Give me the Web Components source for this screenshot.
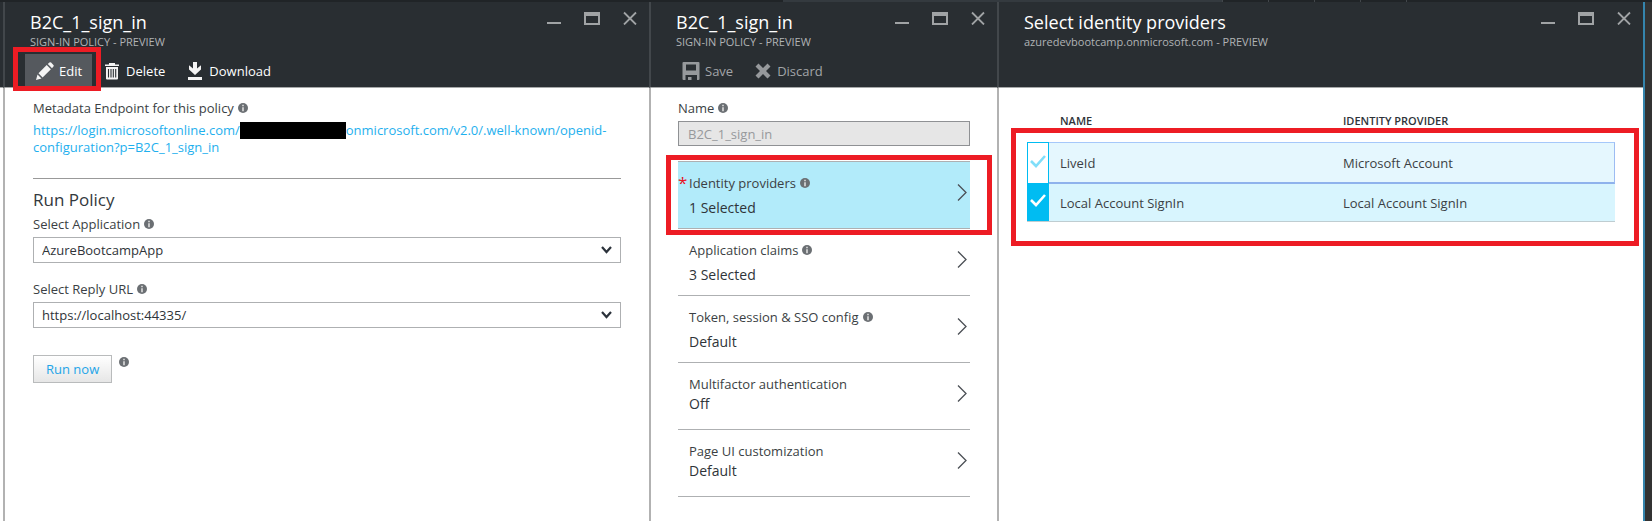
<!DOCTYPE html>
<html lang="en">
<head>
<meta charset="utf-8">
<title>B2C_1_sign_in</title>
<style>
  html, body { margin: 0; }
  body {
    font: 13px/18px "Open Sans", "Noto Sans", sans-serif;
    color: #3b3f44;
    background: #fff;
  }
</style>
</head>
<body>
<portal-page>
  <portal-blade heading="B2C_1_sign_in" subheading="SIGN-IN POLICY - PREVIEW">
    <call-out slot="commands" frame="edit"><command-button icon="edit" active>Edit</command-button></call-out>
    <command-button slot="commands" icon="delete">Delete</command-button>
    <command-button slot="commands" icon="download">Download</command-button>
    <policy-summary></policy-summary>
  </portal-blade>
  <portal-blade heading="B2C_1_sign_in" subheading="SIGN-IN POLICY - PREVIEW" compact>
    <command-button slot="commands" icon="save" disabled>Save</command-button>
    <command-button slot="commands" icon="discard" disabled>Discard</command-button>
    <policy-editor></policy-editor>
  </portal-blade>
  <portal-blade heading="Select identity providers" subheading="azuredevbootcamp.onmicrosoft.com - PREVIEW">
    <provider-table></provider-table>
  </portal-blade>
</portal-page>

<script>
const ICONS = {
  edit: '<path d="M0 18l1.500-5.500 4 4zM2.500 11.300L10.700 3l4.200 4.200-8.300 8.300zM11.800 2l1.600-1.500q.8-.7 1.700.1l2.300 2.300q.8.900 0 1.700L16 6.200z"/>',
  delete: '<path d="M6 1h6v1.500h4V4H2V2.500h4zM3 5h12v11.500q0 1-1 1H4q-1 0-1-1z"/><path d="M5.500 7v8.500M8 7v8.500M10.300 7v8.500M12.700 7v8.500" stroke="#292e32" stroke-width="1.100"/>',
  download: '<path d="M7 0h4v6.500l4-3.300v4.300L9 13 3 7.500V3.200l4 3.300zM2 15h14v3H2z"/>',
  save: '<path fill-rule="evenodd" d="M1.500 0h15q1 0 1 1v16q0 1-1 1H15v-5H3.500v5H1.500q-1 0-1-1V1q0-1 1-1zM4 2.500v6h10v-6z"/><path d="M6 15h3.500v3H6z"/>',
  discard: '<path d="M4.500 1.500L9 6l4.500-4.500 3 3L12 9l4.500 4.500-3 3L9 12l-4.500 4.500-3-3L6 9 1.500 4.500z"/>'
};

function define(name, template, setup) {
  const t = document.createElement('template');
  t.innerHTML = template;
  customElements.define(name, class extends HTMLElement {
    constructor() {
      super();
      this.attachShadow({ mode: 'open' }).append(t.content.cloneNode(true));
    }
    connectedCallback() {
      if (setup) setup(this, this.shadowRoot);
    }
  });
}

define('info-icon', `
  <style>
    :host { display: inline-block; width: 10px; height: 10px; margin-left: 4px; }
    svg { display: block; }
  </style>
  <svg width="10" height="10" viewBox="0 0 10 10" aria-hidden="true">
    <circle cx="5" cy="5" r="5" fill="#6b6f73"/>
    <path d="M4.200 1.800h1.600v1.500H4.200zM4.200 4.200h1.600v4H4.200z" fill="#dcdddd"/>
  </svg>`);

/* A red frame drawn around whatever is slotted in. */
define('call-out', `
  <style>
    :host { display: block; position: relative; }
    .frame { position: absolute; z-index: 2; border: 5px solid #ed1c24; pointer-events: none; }
    :host([frame=edit]) .frame { inset: -7px -9px -4px -12px; }
    :host([frame=item]) .frame { inset: -7px -22px -6px -12px; }
    :host([frame=table]) .frame { inset: -14px -24px -24px -16px; }
  </style>
  <slot></slot><div class="frame"></div>`);

define('command-button', `
  <style>
    :host { display: block; }
    button {
      display: flex; align-items: center; gap: 5px; height: 33px; padding: 0 10px 0 11px;
      border: 0; background: none; color: #fff; font: inherit;
    }
    svg { fill: #f4f4f4; }
    :host([active]) button { background: #55595e; }
    :host([disabled]) button { color: #a2a5a8; }
    :host([disabled]) svg { fill: #96999c; }
  </style>
  <button type="button"><svg width="18" height="18" viewBox="0 0 18 18" aria-hidden="true"></svg><slot></slot></button>`,
  (el, root) => {
    root.querySelector('svg').innerHTML = ICONS[el.getAttribute('icon')];
    root.querySelector('button').disabled = el.hasAttribute('disabled');
  });

define('window-controls', `
  <style>
    :host { display: flex; }
    button { width: 38px; height: 32px; padding: 0; border: 0; background: none; display: grid; place-items: center; }
  </style>
  <button type="button" aria-label="Minimize"><svg width="16" height="14" viewBox="0 0 16 14"><path d="M1 11h14v2H1z" fill="#a0a3a5"/></svg></button>
  <button type="button" aria-label="Maximize"><svg width="16" height="14" viewBox="0 0 16 14"><path fill-rule="evenodd" d="M0 1h16v13H0zM2 5v7h12V5z" fill="#a0a3a5"/></svg></button>
  <button type="button" aria-label="Close"><svg width="16" height="14" viewBox="0 0 16 14"><path d="M2 1.500l12 12M14 1.500l-12 12" stroke="#a0a3a5" stroke-width="1.800"/></svg></button>`);

define('portal-blade', `
  <style>
    :host { display: flex; flex-direction: column; min-width: 0; }
    header {
      display: flex; justify-content: space-between; align-items: flex-start;
      box-sizing: border-box; height: 86px; color: #fff;
      background: #292e32; border-left: 2px solid #42474b; border-bottom: 1px solid #a6a8a9;
    }
    .titles { padding: 8px 0 0 20px; }
    h2 { margin: 0 5px; font-size: 18px; line-height: 24px; font-weight: 400; white-space: nowrap; }
    p { margin: 0 5px; font-size: 11px; line-height: 16px; font-weight: 500; color: #b0b3b5; white-space: nowrap; }
    .commands { display: flex; padding-top: 4px; }
    main { flex: 1; padding: 11px 28px; border-left: 2px solid #b2b2b2; }
    :host([compact]) main { padding: 11px 27px; }
  </style>
  <header>
    <div class="titles"><h2></h2><p></p><div class="commands"><slot name="commands"></slot></div></div>
    <window-controls></window-controls>
  </header>
  <main><slot></slot></main>`,
  (el, root) => {
    root.querySelector('h2').textContent = el.getAttribute('heading');
    root.querySelector('p').textContent = el.getAttribute('subheading');
  });

define('portal-page', `
  <style>
    :host { display: flex; flex-direction: column; min-height: 100vh; }
    .strip { display: flex; height: 2px; background: #202427; }
    .strip i { flex: 45; border-left: 1px solid #42474b; }
    .strip .gap { flex: 785; border: 0; }
    .strip .light { flex: 441; border: 0; background: #343a3f; }
    .strip .rest { flex: 246; }
    .blades {
      flex: 1; display: grid; grid-template-columns: 3px 646fr 348fr 646fr 9px;
    }
    .gutter::before { content: ""; display: block; box-sizing: border-box; height: 86px; background: #292e32; border-bottom: 1px solid #a6a8a9; }
    .rail { background: #333; border-left: 2px solid #3585ad; }
  </style>
  <div class="strip"><i class="gap"></i><i class="light"></i><i></i><i></i><i></i><i></i><i class="rest"></i></div>
  <div class="blades"><div class="gutter"></div><slot></slot><div class="rail"></div></div>`);

define('policy-summary', `
  <style>
    :host { display: block; }
    .link { margin: 5px 0 0; line-height: 17px; }
    a { color: #1fb0ee; text-decoration: none; }
    .redacted { display: inline-block; width: 106px; height: 17px; background: #000; vertical-align: top; }
    hr { height: 1px; margin: 22px 0 9px; border: 0; background: #999; }
    h3 { margin: 0 0 3px; font-size: 17px; line-height: 24px; font-weight: 400; color: #33383d; }
    .field { margin-bottom: 17px; }
    label { display: block; margin-bottom: 4px; }
    .combo { display: grid; align-items: center; }
    .combo > * { grid-area: 1 / 1; }
    select {
      appearance: none; width: 100%; height: 26px; padding: 0 8px; border: 1px solid #aeb0b2; border-radius: 0;
      background: #fff; color: #2f3439; font: inherit;
    }
    .combo svg { justify-self: end; margin-right: 9px; pointer-events: none; }
    .run { display: flex; margin-top: 27px; }
    .run info-icon { margin: 2px 0 0 7px; }
    button {
      height: 28px; padding: 0 12px; border: 1px solid #b9bbbc; color: #1fa5e8; font: inherit;
      background: linear-gradient(#fff, #e6e6e6);
    }
  </style>
  <div>Metadata Endpoint for this policy<info-icon></info-icon></div>
  <p class="link"><a href="#metadata">https://login.microsoftonline.com/<span class="redacted"></span>onmicrosoft.com/v2.0/.well-known/openid-configuration?p=B2C_1_sign_in</a></p>
  <hr>
  <h3>Run Policy</h3>
  <div class="field">
    <label for="app">Select Application<info-icon></info-icon></label>
    <div class="combo"><select id="app"><option>AzureBootcampApp</option></select>
      <svg width="11" height="8" viewBox="0 0 11 8"><path d="M1 1l4.500 5L10 1" fill="none" stroke="#2b323b" stroke-width="2.200"/></svg></div>
  </div>
  <div class="field">
    <label for="url">Select Reply URL<info-icon></info-icon></label>
    <div class="combo"><select id="url"><option>https://localhost:44335/</option></select>
      <svg width="11" height="8" viewBox="0 0 11 8"><path d="M1 1l4.500 5L10 1" fill="none" stroke="#2b323b" stroke-width="2.200"/></svg></div>
  </div>
  <div class="run"><button type="button">Run now</button><info-icon></info-icon></div>`);

define('setting-item', `
  <style>
    :host { display: block; }
    button {
      display: flex; justify-content: space-between; align-items: flex-start; width: 100%; height: 67px;
      padding: 12px 3px 0 0; border: 0; border-bottom: 1px solid #aeb0b2; background: none;
      color: inherit; font: inherit; text-align: left;
    }
    :host([selected]) button { background: #b2ebfa; }
    .text { display: grid; grid-template-columns: 11px 1fr; row-gap: 1px; }
    :host([info]) .text { row-gap: 6px; }
    .star { color: #e81123; font-size: 17px; }
    .value { grid-column: 2; font-size: 14px; line-height: 20px; color: #2f3439; }
    :host(:not([info])) info-icon, :host(:not([required])) .star { visibility: hidden; }
    .chevron { margin-top: 10px; }
  </style>
  <button type="button">
    <span class="text">
      <span class="star">*</span><span><span class="label"></span><info-icon></info-icon></span>
      <span class="value"><slot></slot></span>
    </span>
    <svg class="chevron" width="10" height="17" viewBox="0 0 10 17"><path d="M1 .5l8 8-8 8" fill="none" stroke="#4a4f54" stroke-width="1.300"/></svg>
  </button>`,
  (el, root) => { root.querySelector('.label').textContent = el.getAttribute('label'); });

define('policy-editor', `
  <style>
    :host { display: block; }
    label { display: block; margin-bottom: 4px; }
    input {
      display: block; box-sizing: border-box; width: 100%; height: 25px; padding: 0 9px;
      border: 1px solid #8f9194; background: #e6e6e6; color: #97999c; font: inherit;
    }
    .list { margin-top: 15px; border-top: 1px solid #aeb0b2; }
  </style>
  <label for="name">Name<info-icon></info-icon></label>
  <input id="name" value="B2C_1_sign_in" disabled>
  <div class="list">
    <call-out frame="item"><setting-item label="Identity providers" info required selected>1 Selected</setting-item></call-out>
    <setting-item label="Application claims" info>3 Selected</setting-item>
    <setting-item label="Token, session &amp; SSO config" info>Default</setting-item>
    <setting-item label="Multifactor authentication">Off</setting-item>
    <setting-item label="Page UI customization">Default</setting-item>
  </div>`);

define('provider-table', `
  <style>
    :host { display: block; position: relative; }
    table { width: 100%; border-collapse: separate; border-spacing: 0; table-layout: fixed; }
    th { padding: 13px 11px 12px; font-size: 11px; line-height: 18px; font-weight: 600; text-align: left; color: #2f3439; }
    th.pick { width: 22px; padding: 0; }
    td { box-sizing: border-box; height: 38px; padding: 0 11px; background: #d8f5fe; border-bottom: 1px solid #bfcdd1; }
    .hover td { background: #e5f7fe; border-top: 1px solid #a5c8fa; border-bottom: 2px solid #8eb2ec; height: 42px; }
    .hover td:last-child { border-right: 1px solid #9dbcf2; }
    td.check { padding: 0; background: #00bcf2; }
    .hover td.check { background: #fff; border: 1px solid #00bcf2; }
    label { display: grid; place-items: center; }
    label > * { grid-area: 1 / 1; }
    input { appearance: none; width: 20px; height: 36px; margin: 0; }
    svg { width: 16px; height: 14px; margin-bottom: 5px; fill: none; stroke: #fff; stroke-width: 2.600; pointer-events: none; }
    .hover svg { stroke: #80def9; }
    call-out { position: absolute; inset: 43px 0 0; pointer-events: none; }
  </style>
  <table>
    <thead><tr><th class="pick"></th><th>NAME</th><th>IDENTITY PROVIDER</th></tr></thead>
    <tbody>
      <tr class="hover">
        <td class="check"><label><input type="checkbox" aria-label="LiveId"><svg viewBox="0 0 16 14"><path d="M1 7l5 5 9-10"/></svg></label></td>
        <td>LiveId</td><td>Microsoft Account</td>
      </tr>
      <tr>
        <td class="check"><label><input type="checkbox" checked aria-label="Local Account SignIn"><svg viewBox="0 0 16 14"><path d="M1 7l5 5 9-10"/></svg></label></td>
        <td>Local Account SignIn</td><td>Local Account SignIn</td>
      </tr>
    </tbody>
  </table>
  <call-out frame="table"></call-out>`);
</script>
</body>
</html>
